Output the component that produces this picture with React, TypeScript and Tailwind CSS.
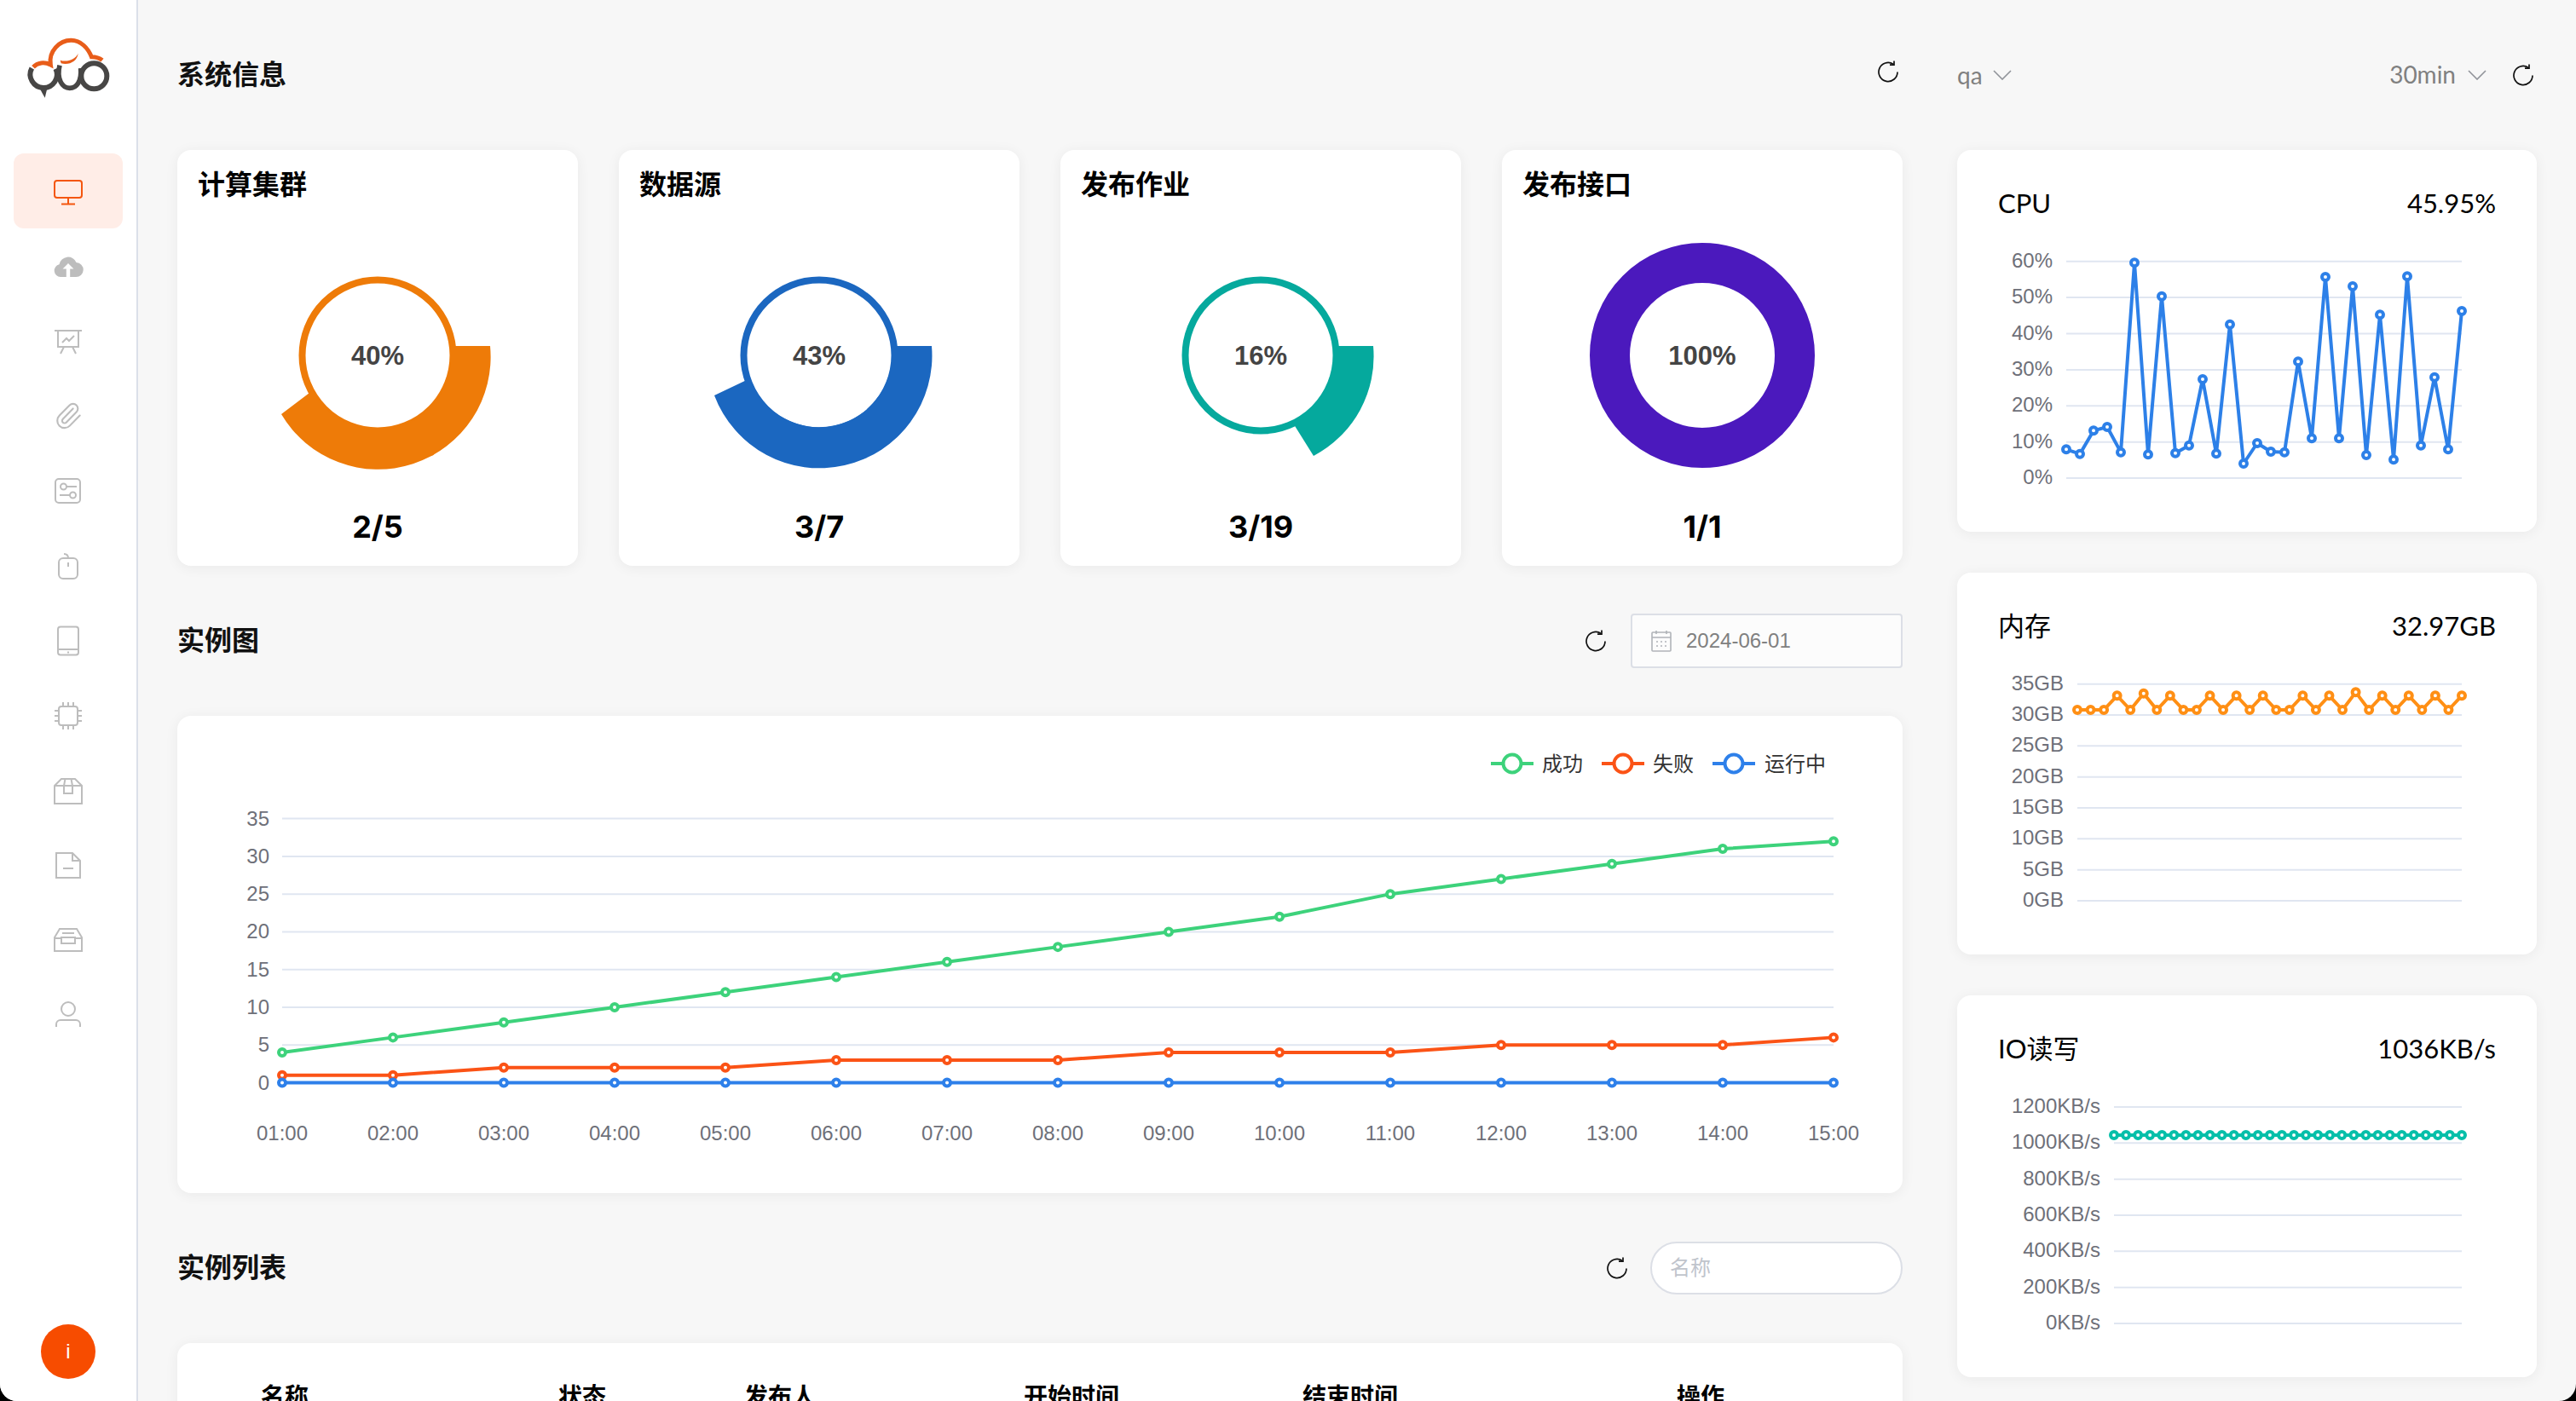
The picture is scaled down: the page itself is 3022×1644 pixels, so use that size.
import React from 'react';
import { Paperclip } from 'lucide-react';

const GRID = '#e0e6f1';
const AXIS = '#6e7079';

const cpuRaw = [1072, 1088, 1006, 993, 1082, 415, 1090, 533, 1085, 1058, 825, 1087, 632, 1122, 1050, 1080, 1082, 763, 1033, 465, 1033, 498, 1092, 598, 1108, 463, 1058, 818, 1072, 585];
const memRaw = [519, 519, 519, 469, 519, 461, 519, 469, 519, 519, 469, 519, 469, 519, 469, 519, 519, 469, 519, 469, 519, 457, 519, 469, 519, 469, 519, 469, 519, 469];

const cpuPoints = cpuRaw.map((z) => z / 3 - 102);
const memPoints = memRaw.map((z) => z / 3 - 108);
const ioPoints = Array.from({ length: 30 }, () => 68);

const success = [4, 6, 8, 10, 12, 14, 16, 18, 20, 22, 25, 27, 29, 31, 32];
const failed = [1, 1, 2, 2, 2, 3, 3, 3, 4, 4, 4, 5, 5, 5, 6];
const running = Array.from({ length: 15 }, () => 0);
const hours = ['01:00', '02:00', '03:00', '04:00', '05:00', '06:00', '07:00', '08:00', '09:00', '10:00', '11:00', '12:00', '13:00', '14:00', '15:00'];

function NavIcon({ children, color = '#bdbdbd' }: { children: React.ReactNode; color?: string }) {
  return (
    <svg width="36" height="36" viewBox="0 0 36 36" fill="none" stroke={color} strokeWidth="2">
      {children}
    </svg>
  );
}

const navIcons = [
  <NavIcon key="monitor" color="#f4560f">
    <rect x="2" y="6" width="32" height="20" rx="3" />
    <path d="M18 26v7M10 33.5h16" />
  </NavIcon>,
  <svg key="cloud" width="36" height="36" viewBox="0 0 36 36">
    <path fill="#bdbdbd" d="M9 31a7.5 7.5 0 0 1-1.5-14.8A10.5 10.5 0 0 1 27.5 14 8.5 8.5 0 0 1 27 31Z" />
    <path fill="#fff" d="M18 15l-6.5 6.5h4.3V31h4.4v-9.5h4.3Z" />
  </svg>,
  <NavIcon key="board">
    <path d="M2 6h32M6 6v19h24V6M13 25l-4 8M23 25l4 8M11 20l5-5 3 3 6-6" />
  </NavIcon>,
  <Paperclip key="clip" size={34} strokeWidth={1.5} color="#bdbdbd" />,
  <NavIcon key="settings">
    <rect x="3" y="4" width="29" height="28" rx="4" />
    <circle cx="12.5" cy="13" r="3.5" />
    <path d="M16 13h12M8 23h12" />
    <circle cx="23.5" cy="23" r="3.5" />
  </NavIcon>,
  <NavIcon key="mouse">
    <rect x="7" y="9" width="22" height="24" rx="5" />
    <path d="M18 9c0-3-2-5-5-5M18 14v5" />
  </NavIcon>,
  <NavIcon key="tablet">
    <rect x="6" y="1.5" width="24" height="33" rx="3" />
    <path d="M6 28h24M17 31.5h2" />
  </NavIcon>,
  <NavIcon key="chip">
    <rect x="7" y="7" width="22" height="22" rx="3" />
    <path d="M2 12h5M2 18h5M2 24h5M29 12h5M29 18h5M29 24h5M12 2v5M18 2v5M24 2v5M12 29v5M18 29v5M24 29v5" />
  </NavIcon>,
  <NavIcon key="package">
    <path d="M2 12l8-8h16l8 8v21H2ZM2 12h32M14.5 4L13 12v9h10v-9L21.5 4" />
  </NavIcon>,
  <NavIcon key="file">
    <path d="M4 3h19l9 9v20H4ZM23 3v9h9M12 21h12" />
  </NavIcon>,
  <NavIcon key="inbox">
    <path d="M8 4h20l6 10v16H2V14ZM2 15h8v6h16v-6h8M11 9h14M9 14h18" />
  </NavIcon>,
  <NavIcon key="user">
    <circle cx="18" cy="10" r="8" />
    <path d="M4 31v-3a5 5 0 0 1 5-5h18a5 5 0 0 1 5 5v3" />
  </NavIcon>,
];

function Logo() {
  return (
    <svg width="120" height="100" viewBox="0 0 360 300" fill="none">
      <path d="M52 150A47 47 0 1 0 136 152" stroke="#474645" strokeWidth="18" />
      <path d="M78 218l28 4-8 32Z" fill="#474645" />
      <path d="M150 140C138 190 160 220 185 220C210 220 228 196 224 150" stroke="#474645" strokeWidth="17" />
      <circle cx="271" cy="178" r="45" stroke="#474645" strokeWidth="18" />
      <path d="M57 146C72 130 96 127 118 138C110 90 150 52 190 52C225 52 250 80 262 110C276 110 290 114 300 122" stroke="#e85d1a" strokeWidth="15" />
      <path d="M152 122C175 130 205 120 215 98C212 125 185 140 155 133Z" fill="#e85d1a" />
    </svg>
  );
}

function Sidebar() {
  return (
    <aside className="w-[162px] shrink-0 h-full bg-white border-r-2 border-[#dbe0e9] flex flex-col">
      <div className="h-[180px] shrink-0 flex justify-center pt-[30px]">
        <Logo />
      </div>
      {navIcons.map((icon, index) => (
        <div
          key={index}
          className={`mx-4 h-[88px] shrink-0 rounded-xl flex items-center justify-center ${index === 0 ? 'bg-[#ffede7]' : ''}`}
        >
          {icon}
        </div>
      ))}
      <div className="mt-auto mb-[26px] mx-auto w-16 h-16 rounded-full bg-[#f74c00] flex items-center justify-center text-white text-2xl">
        i
      </div>
    </aside>
  );
}

function Refresh() {
  return (
    <svg width="26" height="26" viewBox="0 0 26 26" fill="none" stroke="#111" strokeWidth="1.7">
      <path d="M24 13.5a11 11 0 1 1-5-9.2" />
      <path d="M20 .5v4.7h-5" />
    </svg>
  );
}

function Chevron() {
  return (
    <svg width="22" height="12" viewBox="0 0 22 12" fill="none" stroke="#909399" strokeWidth="1.6">
      <path d="M1 1l10 10L21 1" />
    </svg>
  );
}

function SectionHeader({ title, children }: { title: string; children?: React.ReactNode }) {
  return (
    <div className="h-[176px] flex items-center justify-between">
      <h2 className="text-[32px] leading-[48px] font-semibold text-[#111]">{title}</h2>
      {children}
    </div>
  );
}

type DonutProps = {
  title: string;
  percent: string;
  count: string;
  color: string;
  wedge?: string;
};

function Donut({ percent, color, wedge }: Pick<DonutProps, 'percent' | 'color' | 'wedge'>) {
  return (
    <svg width="280" height="280" viewBox="0 0 280 280" className="mx-auto mt-9 block">
      {wedge ? (
        <>
          <circle cx="140" cy="140" r="88.5" fill="none" stroke={color} strokeWidth="8" />
          <path d={wedge} fill={color} />
        </>
      ) : (
        <circle cx="140" cy="140" r="108.5" fill="none" stroke={color} strokeWidth="47" />
      )}
      <text x="140" y="151" textAnchor="middle" fontSize="31" fontWeight="700" fill="#444">
        {percent}
      </text>
    </svg>
  );
}

const donuts: DonutProps[] = [
  {
    title: '计算集群',
    percent: '40%',
    count: '2/5',
    color: '#ee7b08',
    wedge: 'M272 129A132 132 0 0 1 27 209L64 181A85.7 85.7 0 0 0 225 129Z',
  },
  {
    title: '数据源',
    percent: '43%',
    count: '3/7',
    color: '#1b67c0',
    wedge: 'M272 129A132 132 0 0 1 17 187L59 167A85.7 85.7 0 0 0 225 129Z',
  },
  {
    title: '发布作业',
    percent: '16%',
    count: '3/19',
    color: '#05a99d',
    wedge: 'M272 129A132 132 0 0 1 202 258L177 218A85.7 85.7 0 0 0 225 129Z',
  },
  { title: '发布接口', percent: '100%', count: '1/1', color: '#4b19bd' },
];

const cardClass = 'bg-white rounded-2xl shadow-[0_2px_16px_rgba(0,0,0,0.06)]';

function DonutCard({ title, percent, count, color, wedge }: DonutProps) {
  return (
    <div className={`${cardClass} h-[488px] pt-[17px]`}>
      <div className="pl-6 text-[32px] leading-[48px] font-semibold text-black">{title}</div>
      <Donut percent={percent} color={color} wedge={wedge} />
      <div className="mt-[37px] text-center text-[36px] leading-[48px] font-bold text-black font-['Inter']">{count}</div>
    </div>
  );
}

function Marker({ x, y, color }: { x: number; y: number; color: string }) {
  return <circle cx={x} cy={y} r="4" fill="#fff" stroke={color} strokeWidth="4" />;
}

function SeriesLine({ xs, ys, color }: { xs: number[]; ys: number[]; color: string }) {
  return (
    <>
      <polyline points={xs.map((x, i) => `${x},${ys[i]}`).join(' ')} fill="none" stroke={color} strokeWidth="4" strokeLinejoin="round" />
      {xs.map((x, i) => (
        <Marker key={i} x={x} y={ys[i]} color={color} />
      ))}
    </>
  );
}

function LegendItem({ x, textX, color, label }: { x: number; textX: number; color: string; label: string }) {
  return (
    <>
      <path d={`M${x} 56h50`} stroke={color} strokeWidth="4" />
      <circle cx={x + 25} cy="56" r="10.5" fill="#fff" stroke={color} strokeWidth="4" />
      <text x={textX} y="65" fontSize="24" fill="#333">
        {label}
      </text>
    </>
  );
}

function InstanceChart() {
  const xs = hours.map((_, i) => 123 + i * 130);
  const toY = (v: number) => 430.5 - v * 8.854;
  return (
    <svg width="2024" height="560" viewBox="0 0 2024 560" className="block">
      <LegendItem x={1541} textX={1601} color="#3dd27b" label="成功" />
      <LegendItem x={1671} textX={1731} color="#fb5316" label="失败" />
      <LegendItem x={1801} textX={1862} color="#2e80ea" label="运行中" />
      {[0, 5, 10, 15, 20, 25, 30, 35].map((v) => (
        <g key={v}>
          <path d={`M123 ${toY(v)}H1943`} stroke={GRID} strokeWidth="2" />
          <text x="108" y={toY(v) + 8} textAnchor="end" fontSize="24" fill={AXIS}>
            {v}
          </text>
        </g>
      ))}
      {hours.map((h, i) => (
        <text key={h} x={xs[i]} y="498" textAnchor="middle" fontSize="24" fill={AXIS}>
          {h}
        </text>
      ))}
      <SeriesLine xs={xs} ys={success.map(toY)} color="#3dd27b" />
      <SeriesLine xs={xs} ys={failed.map(toY)} color="#fb5316" />
      <SeriesLine xs={xs} ys={running.map(toY)} color="#2e80ea" />
    </svg>
  );
}

type MetricProps = {
  title: string;
  value: string;
  labels: string[];
  x0: number;
  top: number;
  step: number;
  points: number[];
  color: string;
};

function MetricCard({ title, value, labels, x0, top, step, points, color }: MetricProps) {
  const xs = points.map((_, i) => x0 + (i * (592 - x0)) / (points.length - 1));
  return (
    <div className={`${cardClass} h-[448px] pt-[38px]`}>
      <div className="px-12 flex justify-between text-[31px] leading-[48px] text-black font-['Lato','Noto_Sans_CJK_SC',sans-serif]">
        <span>{title}</span>
        <span>{value}</span>
      </div>
      <svg width="680" height="352" viewBox="0 0 680 352" className="block mt-[10px]">
        {labels.map((label, i) => (
          <g key={label}>
            <path d={`M${x0} ${top + i * step}H592`} stroke={GRID} strokeWidth="2" />
            <text x={x0 - 16} y={top + i * step + 7} textAnchor="end" fontSize="24" fill={AXIS}>
              {label}
            </text>
          </g>
        ))}
        <SeriesLine xs={xs} ys={points} color={color} />
      </svg>
    </div>
  );
}

function CalendarIcon() {
  return (
    <svg width="24" height="26" viewBox="0 0 24 26" fill="none" stroke="#b0b3b8" strokeWidth="1.6">
      <rect x="1" y="3" width="22" height="22" rx="1" />
      <path d="M1 9h22M6 1v4M18 1v4M6 14h2M11 14h2M16 14h2M6 19h2M11 19h2M16 19h2" />
    </svg>
  );
}

const tableColumns = ['名称', '状态', '发布人', '开始时间', '结束时间', '操作'];

export default function App() {
  return (
    <div className="w-[3022px] h-[1644px] bg-black overflow-hidden font-['Liberation_Sans','Noto_Sans_CJK_SC',sans-serif]">
      <div className="h-full flex bg-[#f7f7f7] rounded-b-[20px] overflow-hidden">
        <Sidebar />
        <main className="flex-1 pl-[46px] flex gap-16 items-start">
          <section className="w-[2024px] shrink-0">
            <SectionHeader title="系统信息">
              <div className="pr-[4px] mb-2">
                <Refresh />
              </div>
            </SectionHeader>
            <div className="grid grid-cols-4 gap-12">
              {donuts.map((d) => (
                <DonutCard key={d.title} {...d} />
              ))}
            </div>

            <SectionHeader title="实例图">
              <div className="flex items-center gap-[28px]">
                <Refresh />
                <div className="w-[319px] h-[64px] border-2 border-[#dcdfe6] rounded-[4px] bg-[#fcfcfc] flex items-center pl-[22px] gap-[17px] text-2xl text-[#808080]">
                  <CalendarIcon />
                  <span>2024-06-01</span>
                </div>
              </div>
            </SectionHeader>
            <div className={`${cardClass} h-[560px]`}>
              <InstanceChart />
            </div>

            <SectionHeader title="实例列表">
              <div className="flex items-center gap-[26px]">
                <Refresh />
                <div className="w-[296px] h-[62px] border-2 border-[#dcdfe6] rounded-full bg-white flex items-center pl-[21px] text-2xl text-[#c0c4cc]">
                  名称
                </div>
              </div>
            </SectionHeader>
            <div className={`${cardClass} h-[300px] pt-[44px] pl-[98px]`}>
              <div className="grid grid-cols-[349px_218px_328px_327px_439px_1fr] text-[28px] leading-10 font-semibold text-black">
                {tableColumns.map((c) => (
                  <div key={c}>{c}</div>
                ))}
              </div>
            </div>
          </section>

          <section className="w-[680px] shrink-0">
            <div className="h-[176px] flex items-center justify-between text-[28px] text-[#808080] pr-[3px] font-['Lato',sans-serif]">
              <div className="flex items-center gap-3">
                <span>qa</span>
                <Chevron />
              </div>
              <div className="flex items-center">
                <span className="pb-[2px]">30min</span>
                <span className="ml-[14px] mr-[30px]">
                  <Chevron />
                </span>
                <Refresh />
              </div>
            </div>
            <div className="flex flex-col gap-12">
              <MetricCard
                title="CPU"
                value="45.95%"
                labels={['60%', '50%', '40%', '30%', '20%', '10%', '0%']}
                x0={128}
                top={34.7}
                step={42.4}
                points={cpuPoints}
                color="#2d80e8"
              />
              <MetricCard
                title="内存"
                value="32.97GB"
                labels={['35GB', '30GB', '25GB', '20GB', '15GB', '10GB', '5GB', '0GB']}
                x0={141}
                top={34.7}
                step={36.33}
                points={memPoints}
                color="#ff8f14"
              />
              <MetricCard
                title="IO读写"
                value="1036KB/s"
                labels={['1200KB/s', '1000KB/s', '800KB/s', '600KB/s', '400KB/s', '200KB/s', '0KB/s']}
                x0={184}
                top={35}
                step={42.33}
                points={ioPoints}
                color="#06bfa9"
              />
            </div>
          </section>
        </main>
      </div>
    </div>
  );
}
